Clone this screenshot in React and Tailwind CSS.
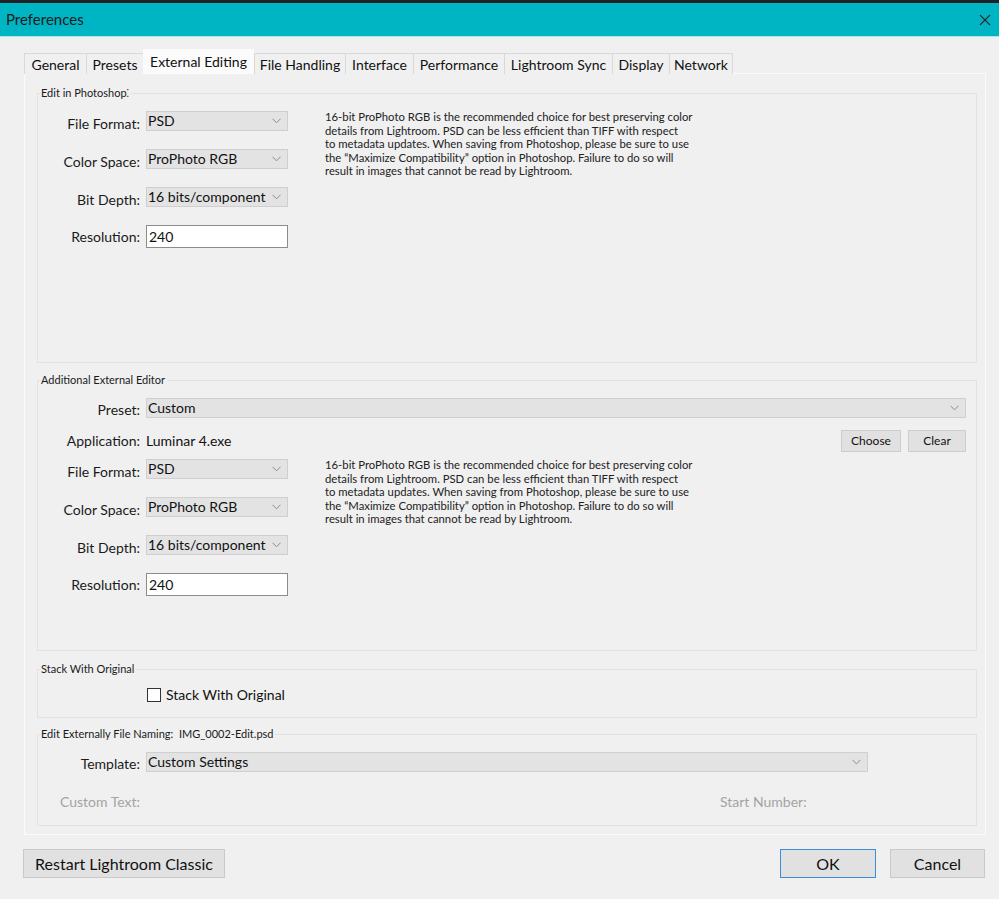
import React from "react";

function Chevron() {
  return (
    <svg width="9" height="6" viewBox="0 0 9 6" className="shrink-0">
      <path d="M0.5 0.8 L4.5 4.8 L8.5 0.8" fill="none" stroke="#8a8a8a" strokeWidth="1" />
    </svg>
  );
}

function Select({ value, className = "" }) {
  return (
    <div className={"h-[20px] bg-[#e3e3e3] border border-[#cfcfcf] flex items-center justify-between pl-[1px] pr-[6px] text-[14px] text-[#111] leading-none " + className}>
      <span>{value}</span>
      <Chevron />
    </div>
  );
}

function Row({ label, children, muted, drop = "" }) {
  return (
    <div className="flex items-center">
      <div className={"w-[102px] text-right text-[14px] leading-none " + drop + " " + (muted ? "text-[#a3a3a3]" : "text-[#1a1a1a]")}>{label}</div>
      <div className="ml-[6px] flex-1 flex items-center">{children}</div>
    </div>
  );
}

function Group({ label, className = "", children }) {
  return (
    <div className={"relative border border-[#e2e2e2] " + className}>
      <div className="absolute left-[3px] -top-[8px] bg-[#f0f0f0] pr-[2px] text-[11px] leading-[14px] text-[#1a1a1a] whitespace-nowrap">{label}</div>
      {children}
    </div>
  );
}

function FormatRows() {
  return (
    <div className="flex flex-col gap-[18px] w-[250px]">
      <Row label="File Format:" drop="translate-y-[3px]"><Select value="PSD" className="w-[142px]" /></Row>
      <Row label="Color Space:" drop="translate-y-[3px]"><Select value="ProPhoto RGB" className="w-[142px]" /></Row>
      <Row label="Bit Depth:" drop="translate-y-[3px]"><Select value="16 bits/component" className="w-[142px]" /></Row>
      <Row label="Resolution:">
        <div className="w-[142px] h-[23px] bg-white border border-[#8c8c8c] flex items-center pl-[2px] text-[14px] leading-none text-[#111]">240</div>
      </Row>
    </div>
  );
}

function Description() {
  return (
    <div className="ml-[37px] text-[11.3px] leading-[13.5px] text-[#222] whitespace-nowrap -mt-[1px]">
      16-bit ProPhoto RGB is the recommended choice for best preserving color<br />
      details from Lightroom. PSD can be less efficient than TIFF with respect<br />
      to metadata updates. When saving from Photoshop, please be sure to use<br />
      the “Maximize Compatibility” option in Photoshop. Failure to do so will<br />
      result in images that cannot be read by Lightroom.
    </div>
  );
}

const tabs = [
  ["General", 62],
  ["Presets", 57],
  ["External Editing", 111],
  ["File Handling", 91],
  ["Interface", 68],
  ["Performance", 91],
  ["Lightroom Sync", 108],
  ["Display", 57],
  ["Network", 64],
];

export default function App() {
  return (
    <div className="w-[999px] h-[899px] bg-[#f0f0f0] flex flex-col font-['Lato','Noto_Sans',sans-serif] overflow-hidden">
      {/* Title bar */}
      <div className="h-[37px] shrink-0 border-t-[3px] border-t-[#1c2226] border-b border-b-[#a9e5ea] bg-[#00b5c3] flex items-center justify-between pl-[6px] pr-[8px]">
        <span className="text-[15px] text-[#1b1b1b]">Preferences</span>
        <svg width="12" height="12" viewBox="0 0 12 12">
          <path d="M1 1 L11 11 M11 1 L1 11" stroke="#2a2a2a" strokeWidth="1.1" />
        </svg>
      </div>

      <div className="pl-[24px] pr-[13px]">
        {/* Tabs */}
        <div className="mt-[12px] h-[25px] flex items-end relative z-10 -mb-[1px]">
          {tabs.map(([t, w]) => {
            const sel = t === "External Editing";
            return (
              <div
                key={t}
                style={{ width: w }}
                className={
                  sel
                    ? "h-[25px] bg-[#fbfbfb] flex items-center justify-center text-[14px] text-[#111] pb-[1px]"
                    : "h-[21px] border-t border-l border-[#d9d9d9] last:border-r bg-[#f0f0f0] flex items-center justify-center text-[14px] text-[#111]"
                }
              >
                {t}
              </div>
            );
          })}
        </div>

        {/* Panel */}
        <div className="h-[762px] border border-[#fbfbfb] bg-[#f0f0f0] pt-[19px] pl-[12px] pr-[8px]">
          <Group label="Edit in Photoshop⁚" className="h-[270px]">
            <div className="pt-[17px] flex">
              <FormatRows />
              <Description />
            </div>
          </Group>

          <Group label="Additional External Editor" className="h-[271px] mt-[17px]">
            <div className="pt-[17px] pr-[10px]">
              <Row label="Preset:" drop="translate-y-[2px]"><Select value="Custom" className="flex-1" /></Row>
              <div className="mt-[12px] h-[22px] flex items-center">
                <div className="w-[102px] text-right text-[14px] leading-none text-[#1a1a1a]">Application:</div>
                <div className="ml-[6px] flex-1 text-[14px] leading-none text-[#111]">Luminar 4.exe</div>
                <div className="w-[60px] h-[22px] bg-[#e1e1e1] border border-[#cdcdcd] flex items-center justify-center text-[12px] text-[#111]">Choose</div>
                <div className="ml-[7px] w-[58px] h-[22px] bg-[#e1e1e1] border border-[#cdcdcd] flex items-center justify-center text-[12px] text-[#111]">Clear</div>
              </div>
              <div className="mt-[7px] flex">
                <FormatRows />
                <Description />
              </div>
            </div>
          </Group>

          <Group label="Stack With Original" className="h-[49px] mt-[18px]">
            <div className="pt-[18px] pl-[109px] flex items-center">
              <div className="w-[14px] h-[14px] bg-white border border-[#333]" />
              <span className="ml-[5px] text-[14px] leading-none text-[#111]">Stack With Original</span>
            </div>
          </Group>

          <Group label={"Edit Externally File Naming:\u00a0\u00a0IMG_0002-Edit.psd"} className="h-[92px] mt-[16px]">
            <div className="pt-[17px]">
              <Row label="Template:" drop="translate-y-[2px]"><Select value="Custom Settings" className="w-[722px]" /></Row>
              <div className="mt-[23px] flex items-center">
                <div className="w-[102px] text-right text-[14px] leading-none text-[#a3a3a3]">Custom Text:</div>
                <div className="ml-[580px] text-[14px] leading-none text-[#a3a3a3]">Start Number:</div>
              </div>
            </div>
          </Group>
        </div>
      </div>

      {/* Bottom buttons */}
      <div className="mt-[14px] pl-[23px] pr-[14px] flex items-center">
        <div className="w-[202px] h-[29px] bg-[#e1e1e1] border border-[#c9c9c9] flex items-center justify-center text-[16px] text-[#111]">Restart Lightroom Classic</div>
        <div className="flex-1" />
        <div className="w-[96px] h-[29px] bg-[#e1e1e1] border border-[#3d8ed8] flex items-center justify-center text-[16px] text-[#111]">OK</div>
        <div className="ml-[14px] w-[95px] h-[29px] bg-[#e1e1e1] border border-[#c9c9c9] flex items-center justify-center text-[16px] text-[#111]">Cancel</div>
      </div>
    </div>
  );
}
